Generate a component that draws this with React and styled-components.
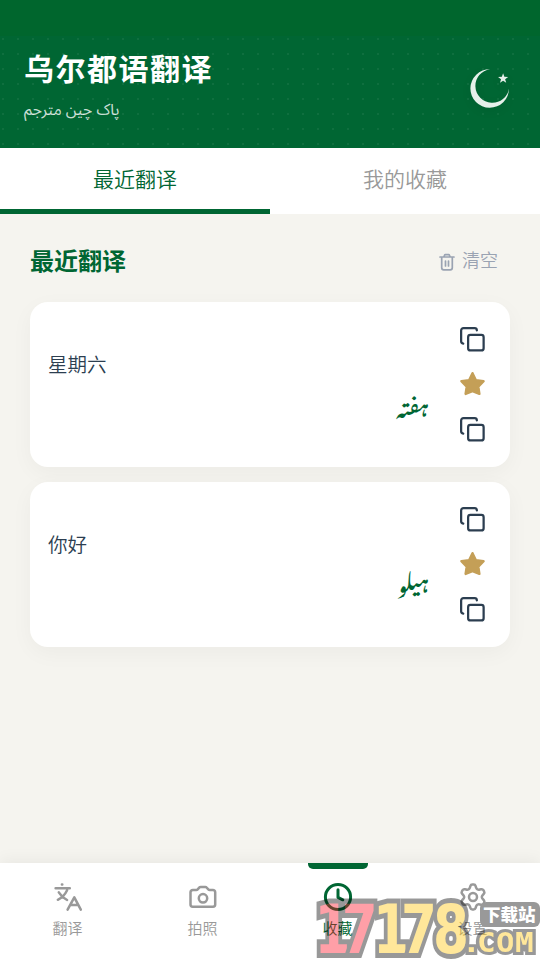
import React, { useState } from "react";
import styled, { createGlobalStyle } from "styled-components";

const GREEN = "#006633";

const HISTORY = [
  { id: 1, source: "星期六", target: "ہفتہ" },
  { id: 2, source: "你好", target: "ہیلو" },
];

function CopyIcon() {
  return (
    <Icon viewBox="0 0 24 24" $weight={1.8}>
      <rect x="8.900" y="8.700" width="12.400" height="12.400" rx="1.800" />
      <path d="M5 15.700c-1.100-.2-1.700-.9-1.700-1.900V5.200c0-1.100.8-1.900 1.900-1.900h9c1 0 1.600.6 1.700 1.800" />
    </Icon>
  );
}

function StarIcon() {
  return (
    <Icon viewBox="0 0 30 30" $weight={2.4}>
      <path
        fill="#c49f57"
        stroke="#c49f57"
        d="M15.500 4.200l3.400 7.100 7.700.9-5.300 5.500 1.100 7.200-6.900-2.700-6.900 2.700 1.100-7.200-5.300-5.500 7.700-.9z"
      />
    </Icon>
  );
}

function TrashIcon() {
  return (
    <TrashSvg viewBox="0 0 18 20">
      <path d="M2 5h14M3.700 5.200v10.600a2 2 0 0 0 2 2h6.600a2 2 0 0 0 2-2V5.200M5.800 4.800l.7-1.500a1 1 0 0 1 .9-.6h3.200a1 1 0 0 1 .9.6l.7 1.500M7.500 9v5M10.500 9v5" />
    </TrashSvg>
  );
}

function TranslateIcon() {
  return (
    <Icon viewBox="0.7 0 30 30">
      <path d="M9.600 2.400h.4M3.300 6.300h14.200M14.800 8.200q-3 6.400-9.300 9.600M6.500 10.300q3 5 8.300 7.700M15.300 27.700l6.700-12.400 6.500 12.400M18 23h8" />
    </Icon>
  );
}

function CameraIcon() {
  return (
    <Icon viewBox="0 0 30 30">
      <path d="M2.500 10.300a2.200 2.200 0 0 1 2.200-2.200h3.500a2 2 0 0 0 1.500-.7l1.500-1.700a2 2 0 0 1 1.500-.7h4.600a2 2 0 0 1 1.500.7l1.500 1.700a2 2 0 0 0 1.500.7H25a2.200 2.200 0 0 1 2.200 2.200v12.300a2.200 2.200 0 0 1-2.200 2.200H4.700a2.200 2.200 0 0 1-2.200-2.200z" />
      <circle cx="15" cy="16.300" r="4.200" />
    </Icon>
  );
}

function ClockIcon() {
  return (
    <Icon viewBox="0 0 30 30" $weight={3}>
      <circle cx="15" cy="15" r="12.600" />
      <path d="M15 7.800v7.600l4.800 2.400" />
    </Icon>
  );
}

function gearPath(cx, cy) {
  const points = [];
  for (let i = 0; i < 6; i++) {
    const mid = i * 60 - 90;
    [
      [-23, 8.9],
      [-10, 12.6],
      [10, 12.6],
      [23, 8.9],
    ].forEach(([offset, r]) => {
      const a = ((mid + offset) * Math.PI) / 180;
      points.push([cx + r * Math.cos(a), cy + r * Math.sin(a)]);
    });
  }
  // curve around each corner so the teeth come out rounded
  const lerp = (a, b, t) => `${a[0] + (b[0] - a[0]) * t} ${a[1] + (b[1] - a[1]) * t}`;
  return (
    points
      .map((p, i) => {
        const prev = points[(i + points.length - 1) % points.length];
        const next = points[(i + 1) % points.length];
        return `${i ? "L" : "M"}${lerp(prev, p, 0.65)}Q${p[0]} ${p[1]} ${lerp(p, next, 0.35)}`;
      })
      .join("") + "Z"
  );
}

function GearIcon() {
  return (
    <Icon viewBox="0 0 30 30">
      <path d={gearPath(15, 15)} />
      <circle cx="15" cy="15" r="4" />
    </Icon>
  );
}

const NAV = [
  { label: "翻译", icon: TranslateIcon },
  { label: "拍照", icon: CameraIcon },
  { label: "收藏", icon: ClockIcon },
  { label: "设置", icon: GearIcon },
];

function Stamp() {
  return (
    <StampSvg viewBox="0 0 224 64">
      <g opacity="0.4">
        <StampText transform="scale(.76 1)" fontSize="68" $outline={10}>
          <tspan x="-2 34" y="57" fill="#ff1125">17</tspan>
          <tspan x="75 112 154" y="57" fill="#ffc505">178</tspan>
        </StampText>
        <StampText
          transform="scale(1.15 1)"
          x="127 140 156.500 173"
          y="56"
          fontSize="27"
          $outline={6}
          $mono
          fill="#ffc505"
        >
          .COM
        </StampText>
      </g>
      <rect x="164" y="6" width="60" height="25" rx="6" fill="#999" />
      <StampLabel x="167" y="25">下载站</StampLabel>
    </StampSvg>
  );
}

export default function App() {
  const [tab, setTab] = useState(0);
  return (
    <>
      <GlobalStyle />
      <Screen>
        <Header>
          <HeaderBody>
            <div>
              <AppTitle>乌尔都语翻译</AppTitle>
              <AppSubtitle dir="rtl">پاک چین مترجم</AppSubtitle>
            </div>
            <Crescent viewBox="0 0 42 42">
              <path d="M21 2.200A19.300 19.300 0 1 0 40 21.500A16.900 16.900 0 1 1 21 2.200Z" />
              <path d="M34.100 6.200l1.250 3.600 3.800.08-3.030 2.300 1.100 3.650-3.120-2.170-3.120 2.170 1.100-3.650-3.030-2.300 3.800-.08z" />
            </Crescent>
          </HeaderBody>
        </Header>
        <Tabs>
          {["最近翻译", "我的收藏"].map((label, i) => (
            <Tab key={label} $active={tab === i} onClick={() => setTab(i)}>
              {label}
            </Tab>
          ))}
        </Tabs>
        <Content>
          <SectionHead>
            <SectionTitle>最近翻译</SectionTitle>
            <ClearButton>
              <TrashIcon />
              清空
            </ClearButton>
          </SectionHead>
          {HISTORY.map((item) => (
            <Card key={item.id}>
              <CardText>
                <Source>{item.source}</Source>
                <Target dir="rtl" lang="ur">
                  {item.target}
                </Target>
              </CardText>
              <Actions>
                <CopyIcon />
                <StarIcon />
                <CopyIcon />
              </Actions>
            </Card>
          ))}
        </Content>
        <NavBar>
          {NAV.map(({ label, icon: NavIcon }, i) => (
            <NavItem key={label} $active={i === 2}>
              <NavIcon />
              <span>{label}</span>
            </NavItem>
          ))}
        </NavBar>
        <Stamp />
      </Screen>
    </>
  );
}

const GlobalStyle = createGlobalStyle`
  * {
    box-sizing: border-box;
  }
  body {
    margin: 0;
    font-family: "Noto Sans CJK SC", "Noto Sans", sans-serif;
    font-weight: 350;
  }
  button {
    font: inherit;
    border: none;
    background: none;
    padding: 0;
  }
`;
const Screen = styled.div`
  position: relative;
  display: flex;
  flex-direction: column;
  width: 540px;
  height: 960px;
  overflow: hidden;
  background: #f5f4ef;
`;
const Header = styled.header`
  height: 148px;
  padding-top: 36px;
  background: linear-gradient(#00662d 36px, ${GREEN} 36px);
`;
const HeaderBody = styled.div`
  display: flex;
  justify-content: space-between;
  height: 112px;
  padding: 9px 29px 0 24px;
  background: radial-gradient(
      circle at 3px 3px,
      rgba(255, 255, 255, 0.06) 1.2px,
      transparent 1.4px
    )
    0 0 / 15px 15px;
`;
const AppTitle = styled.h1`
  margin: 0;
  color: #fff;
  font-size: 30px;
  font-weight: 700;
  line-height: 45px;
  letter-spacing: 1.5px;
`;
const AppSubtitle = styled.div`
  width: max-content;
  margin-top: 8px;
  color: rgba(255, 255, 255, 0.8);
  font-family: "Noto Sans Arabic", "Noto Sans", sans-serif;
  font-size: 15.7px;
  font-weight: 400;
  line-height: 24px;
`;
const Crescent = styled.svg`
  width: 42px;
  height: 42px;
  margin-top: 22px;
  fill: #e6f0ea;
  filter: drop-shadow(0 3px 4px rgba(0, 0, 0, 0.08));
`;
const Tabs = styled.div`
  display: flex;
  height: 66px;
  background: #fff;
`;
const Tab = styled.button`
  flex: 1;
  padding-bottom: 1px;
  font-size: 21px;
  color: ${(p) => (p.$active ? GREEN : "#999")};
  border-bottom: 5px solid ${(p) => (p.$active ? GREEN : "transparent")};
`;
const Content = styled.main`
  flex: 1;
  display: flex;
  flex-direction: column;
  gap: 15px;
  padding: 30px 30px 0;
`;
const SectionHead = styled.div`
  display: flex;
  align-items: center;
  justify-content: space-between;
  height: 43px;
  padding-right: 12px;
  padding-bottom: 12px;
`;
const SectionTitle = styled.h2`
  margin: 0;
  color: ${GREEN};
  font-size: 24px;
  font-weight: 700;
  line-height: 36px;
`;
const ClearButton = styled.button`
  display: flex;
  align-items: center;
  gap: 6px;
  color: #9aa3b2;
  font-size: 18px;
  line-height: 27px;
`;
const TrashSvg = styled.svg`
  width: 18px;
  height: 20px;
  margin-top: 4px;
  fill: none;
  stroke: currentColor;
  stroke-width: 1.7;
  stroke-linecap: round;
`;
const Card = styled.article`
  display: flex;
  height: 165px;
  padding: 18px;
  border-radius: 18px;
  background: #fff;
  box-shadow: 0 6px 22px rgba(0, 0, 0, 0.04);
`;
const CardText = styled.div`
  flex: 1;
  display: flex;
  flex-direction: column;
  padding-top: 29px;
`;
const Source = styled.div`
  color: #2c3e50;
  font-size: 19.5px;
  line-height: 29px;
`;
const Target = styled.div`
  margin-top: 8px;
  padding-right: 28px;
  color: ${GREEN};
  font-family: "Noto Nastaliq Urdu", "DejaVu Sans", sans-serif;
  font-size: 22.5px;
  font-weight: 500;
  line-height: 32px;
`;
const Actions = styled.div`
  display: flex;
  flex-direction: column;
  align-items: center;
  gap: 15px;
  padding: 4px 5px 0 0;
  color: #2c3e50;
`;
const Icon = styled.svg`
  display: block;
  flex: none;
  width: 30px;
  height: 30px;
  fill: none;
  stroke: currentColor;
  stroke-width: ${(p) => p.$weight || 2.5};
  stroke-linecap: round;
  stroke-linejoin: round;
`;
const NavBar = styled.nav`
  display: flex;
  height: 97px;
  background: #fff;
  box-shadow: 0 -3px 15px rgba(0, 0, 0, 0.05);
`;
const NavItem = styled.div`
  flex: 1;
  display: flex;
  flex-direction: column;
  align-items: center;
  color: ${(p) => (p.$active ? GREEN : "#999")};
  font-size: 15px;
  line-height: 22px;

  &::before {
    content: "";
    width: 60px;
    height: 6px;
    margin-bottom: 13px;
    border-radius: 0 0 5px 5px;
    background: ${(p) => (p.$active ? GREEN : "transparent")};
  }
  span {
    margin-top: 5px;
  }
`;
const StampSvg = styled.svg`
  position: absolute;
  right: 0;
  bottom: 0;
  width: 224px;
  height: 64px;
  overflow: visible;
  pointer-events: none;
`;
const StampText = styled.text`
  font-family: ${(p) => (p.$mono ? '"DejaVu Sans Mono", monospace' : '"DejaVu Sans", sans-serif')};
  font-weight: 700;
  stroke: #000;
  stroke-width: ${(p) => p.$outline};
  paint-order: stroke;
`;
const StampLabel = styled.text`
  fill: #fff;
  font-family: "Noto Sans CJK SC", sans-serif;
  font-size: 17.5px;
  font-weight: 900;
`;
